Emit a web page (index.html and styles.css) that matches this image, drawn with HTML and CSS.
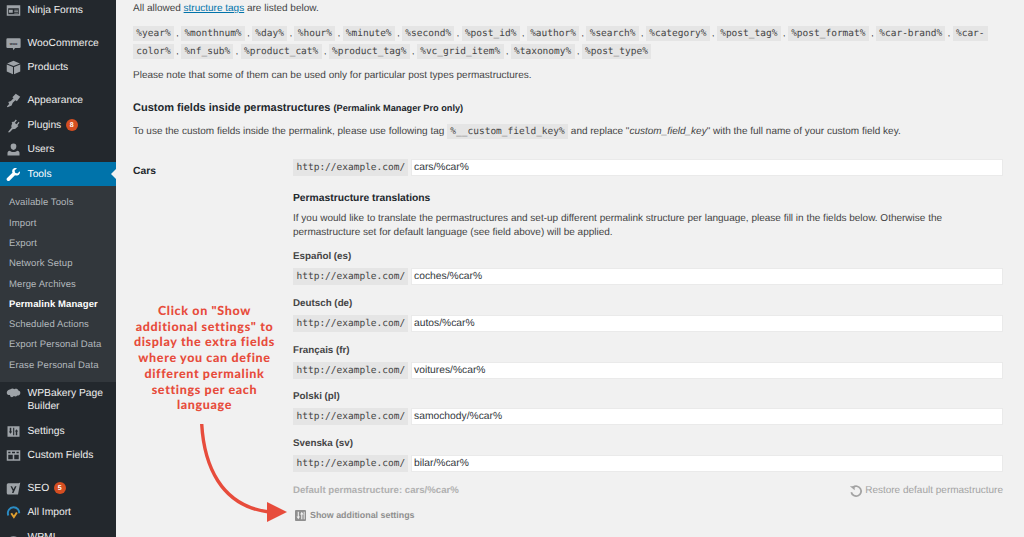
FILE: index.html
```html
<!DOCTYPE html>
<html lang="en">
<head>
<meta charset="utf-8">
<title>Permalink Manager</title>
<link rel="stylesheet" href="styles.css">
</head>
<body>
<div class="shell">
  <nav class="sidebar">
    <ul class="menu">
      <li class="item gap-after"><svg class="ico" viewBox="0 0 20 20"><path fill="#9ea3a8" fill-rule="evenodd" d="M1 3h18v14H1zM3 7v8h14V7zM4 9h5v4H4zM11 9h5v1h-5zM11 11h5v1h-5zM11 13h5v1h-5z"/></svg><span>Ninja Forms</span></li>
      <li class="item"><svg class="ico" viewBox="0 0 20 20"><path fill="#9ea3a8" d="M2 3h16a1.500 1.500 0 0 1 1.500 1.500v10a1.500 1.500 0 0 1-1.500 1.500h-6l-2 3-1-3H2a1.500 1.500 0 0 1-1.500-1.500v-10A1.500 1.500 0 0 1 2 3z"/><text x="10" y="11.500" class="woo">woo</text></svg><span>WooCommerce</span></li>
      <li class="item gap-after"><svg class="ico" viewBox="0 0 20 20"><path fill="#9ea3a8" d="M10 1l8.500 3.500L10 8 1.500 4.500zM1 6l8.300 3.400V19L1 15.200zM19 6l-8.300 3.400V19l8.300-3.800z"/></svg><span>Products</span></li>
      <li class="item"><svg class="ico" viewBox="0 0 20 20"><path fill="#9ea3a8" d="M13 1l6 4-4.500 6-2-1.500-3.500 3.500-1.500 3.500L2 19l-.8-1 3-3.500L3 12l3.500-1.500L10 7 8.500 5.500z"/></svg><span>Appearance</span></li>
      <li class="item"><svg class="ico" viewBox="0 0 20 20"><path fill="#9ea3a8" d="M13 2l1.500 1.200-2.700 3.300 2.300 1.800 2.700-3.300L18 6.200l-2.800 3.400 1.500 1.200-2 1.500c-1.500 2-3.500 3-5.500 2.500L5 19H2.500l5-6.500c-.8-1.500-.5-3.500.8-5L7.500 6l2-1.500 1 .8z"/></svg><span>Plugins</span><b class="badge">8</b></li>
      <li class="item"><svg class="ico" viewBox="0 0 20 20"><path fill="#9ea3a8" d="M10 2a3.800 3.800 0 0 1 3.800 4c0 2.500-1.700 4.500-3.800 4.500S6.200 8.500 6.200 6A3.800 3.800 0 0 1 10 2zM2 18v-3.500c0-1.500 1-2.500 3-3 1 1 3 1.800 5 1.800s4-.8 5-1.800c2 .5 3 1.500 3 3V18z"/></svg><span>Users</span></li>
      <li class="item active"><svg class="ico" viewBox="0 0 20 20"><path fill="#fff" d="M18.500 5.500l-3.300 3-3-1-.8-3 3.200-3c-2.500-.8-5 0-6 2-.6 1.300-.6 2.700 0 4L1.500 14.500c-1 1-1 2.500 0 3.500s2.500 1 3.500 0l7-7c1.300.5 2.700.5 4 0 2-1 3.200-3.500 2.500-5.500z"/></svg><span>Tools</span></li>
      <li class="submenu">
        <a>Available Tools</a>
        <a>Import</a>
        <a>Export</a>
        <a>Network Setup</a>
        <a>Merge Archives</a>
        <a class="current">Permalink Manager</a>
        <a>Scheduled Actions</a>
        <a>Export Personal Data</a>
        <a>Erase Personal Data</a>
      </li>
      <li class="item tall"><svg class="ico" viewBox="0 0 20 20"><path fill="#9ea3a8" d="M6 3c2-1.500 4-1 5 0 2-1.200 5-.5 5.500 1.500 2 .5 3 2 2.500 4-.5 2-2 3-4 2.800-1 1.500-3 1.700-4.500.7-1 1.500-3 2-4 1-1-.6-1.200-2-1-2.500C3 11 1 9.500 1 7.500S3 3.500 6 3z"/></svg><span>WPBakery Page Builder</span></li>
      <li class="item"><svg class="ico" viewBox="0 0 20 20"><path fill="#9ea3a8" fill-rule="evenodd" d="M2 3h16v14H2zM5 5v5H3.800l2.200 3 2.200-3H7V5zM13 15v-5h-1.200L14 7l2.200 3H15v5zM9.500 5v10h1.500V5z"/></svg><span>Settings</span></li>
      <li class="item gap-after"><svg class="ico" viewBox="0 0 20 20"><path fill="#9ea3a8" fill-rule="evenodd" d="M1 3h18v14H1zM3 5v2h3V5zM8 5v2h4V5zM14 5v2h3V5zM3 9v6h6V9zM11 9v6h6V9z"/></svg><span>Custom Fields</span></li>
      <li class="item"><svg class="ico" viewBox="0 0 20 20"><path fill="#9ea3a8" fill-rule="evenodd" d="M3 3h14l2-1-3 16H3a2 2 0 0 1-2-2V5a2 2 0 0 1 2-2zM6 7l3 6-1 3h2l4-9h-2l-2 4-2-4z"/></svg><span>SEO</span><b class="badge">5</b></li>
      <li class="item"><svg class="ico" viewBox="0 0 20 20"><path fill="none" stroke="#2b8cc4" stroke-width="2.600" d="M3 14C1 8 5 3 10 3s8 4 7.500 8"/><path fill="none" stroke="#e0a030" stroke-width="2.600" d="M7 11l3.500 5 4-6"/></svg><span>All Import</span></li>
      <li class="item"><svg class="ico" viewBox="0 0 20 20"><path fill="none" stroke="#9ea3a8" stroke-width="2" d="M3 14a7.500 7.500 0 0 1 14 0"/></svg><span>WPML</span></li>
    </ul>
  </nav>

  <main class="content">
    <p class="intro">All allowed <a class="link">structure tags</a> are listed below.</p>
    <p class="tags"><code>%year%</code> , <code>%monthnum%</code> , <code>%day%</code> , <code>%hour%</code> , <code>%minute%</code> , <code>%second%</code> , <code>%post_id%</code> , <code>%author%</code> , <code>%search%</code> , <code>%category%</code> , <code>%post_tag%</code> , <code>%post_format%</code> , <code>%car-brand%</code> , <code>%car-</code><br><code>color%</code> , <code>%nf_sub%</code> , <code>%product_cat%</code> , <code>%product_tag%</code> , <code>%vc_grid_item%</code> , <code>%taxonomy%</code> , <code>%post_type%</code></p>
    <p class="note">Please note that some of them can be used only for particular post types permastructures.</p>
    <h3 class="heading">Custom fields inside permastructures <small>(Permalink Manager Pro only)</small></h3>
    <p class="usage">To use the custom fields inside the permalink, please use following tag <code>%__custom_field_key%</code> and replace "<em>custom_field_key</em>" with the full name of your custom field key.</p>

    <section class="setting">
      <div class="setting-label">Cars</div>
      <div class="setting-body">
        <div class="field"><span class="prefix">http://example.com/</span><span class="value">cars/%car%</span></div>
        <h4 class="sub-title">Permastructure translations</h4>
        <p class="sub-desc">If you would like to translate the permastructures and set-up different permalink structure per language, please fill in the fields below. Otherwise the permastructure set for default language (see field above) will be applied.</p>
        <div class="lang">Español (es)</div>
        <div class="field"><span class="prefix">http://example.com/</span><span class="value">coches/%car%</span></div>
        <div class="lang">Deutsch (de)</div>
        <div class="field"><span class="prefix">http://example.com/</span><span class="value">autos/%car%</span></div>
        <div class="lang">Français (fr)</div>
        <div class="field"><span class="prefix">http://example.com/</span><span class="value">voitures/%car%</span></div>
        <div class="lang">Polski (pl)</div>
        <div class="field"><span class="prefix">http://example.com/</span><span class="value">samochody/%car%</span></div>
        <div class="lang">Svenska (sv)</div>
        <div class="field"><span class="prefix">http://example.com/</span><span class="value">bilar/%car%</span></div>
        <div class="defaults">
          <span class="default-text">Default permastructure: cars/%car%</span>
          <span class="restore"><svg class="restore-ico" viewBox="0 0 16 16"><path fill="none" stroke="#a3a3a3" stroke-width="2" d="M4.500 3.800A5.700 5.700 0 1 1 2.600 9.500"/><path fill="#a3a3a3" d="M1 2.500h5.500V7z"/></svg>Restore default permastructure</span>
        </div>
        <div class="additional"><svg class="add-ico" viewBox="0 0 12 12"><rect width="12" height="12" rx="1" fill="#8f8f8f"/><path fill="#f1f1f1" d="M3 2h1.200v5H5.500L3.600 10 1.700 7H3zM8 10H6.800V5H5.500l1.900-3 1.900 3H8zM9.500 2h1v8h-1z"/></svg>Show additional settings</div>
      </div>
    </section>

    <p class="callout">Click on "Show<br>additional settings" to<br>display the extra fields<br>where you can define<br>different permalink<br>settings per each<br>language</p>
    <svg class="arrow" viewBox="0 0 92 101"><path fill="none" stroke="#e74c3c" stroke-width="3.400" d="M6.700 0C9 40 25 82 74 88"/><path fill="#e74c3c" d="M72 78l20 10-20 10z"/></svg>
  </main>
</div>
</body>
</html>
```
FILE: styles.css
```css
* { box-sizing: border-box; }
html, body { margin: 0; height: 537px; overflow: hidden; }
body { background: #f1f1f1; color: #444; font-family: "Liberation Sans", Arial, sans-serif; font-size: 10px; text-rendering: geometricPrecision; }
.shell { display: flex; height: 537px; overflow: hidden; }

.sidebar { width: 116px; flex: none; background: #23282d; }
.menu { list-style: none; margin: -1.500px 0 0; padding: 0; }
.item { display: flex; align-items: center; min-height: 24.500px; padding-left: 6px; color: #eee; font-size: 10.300px; line-height: 13px; }
.item span { margin-left: 6.500px; }
.item.gap-after { margin-bottom: 8.200px; }
.item.active { background: #0073aa; color: #fff; position: relative; }
.item.active::after { content: ""; position: absolute; right: 0; top: 7px; border: 5px solid transparent; border-left-width: 0; border-right-color: #f1f1f1; }
.item.tall { min-height: 37px; align-items: flex-start; padding-top: 5px; }
.ico { width: 15px; height: 15px; flex: none; }
.woo { font: bold 5px "Liberation Sans", sans-serif; fill: #23282d; text-anchor: middle; }
.badge { display: inline-flex; align-items: center; justify-content: center; width: 12px; height: 12px; margin-left: 4.500px; border-radius: 50%; background: #d54e21; color: #fff; font-size: 7px; font-weight: 700; }
.submenu { background: #32373c; padding: 7px 0 6px; }
.submenu a { display: block; height: 20.300px; line-height: 20.300px; padding-left: 9px; color: #b4b9be; font-size: 9.500px; letter-spacing: .1px; white-space: nowrap; }
.submenu a.current { color: #fff; font-weight: 700; }

.content { flex: 1; min-width: 0; padding: 2px 21px 0 17px; position: relative; line-height: 14px; }
p { margin: 0; }
.link { color: #0073aa; text-decoration: underline; }
code { font-family: "DejaVu Sans Mono", "Liberation Mono", monospace; font-size: 9.500px; background: #e5e5e5; padding: 2px 3.300px; color: #444; }
.tags { margin-top: 9px; font-size: 8.600px; line-height: 16.700px; }
.note { margin-top: 9px; }
.heading { margin: 18px 0 0; font-size: 11px; line-height: 14px; color: #23282d; font-weight: 700; }
.heading small { font-size: 9.200px; }
.usage { margin-top: 10px; }

.setting { display: flex; margin-top: 20px; }
.setting-label { width: 160px; flex: none; font-size: 10.300px; font-weight: 700; color: #23282d; padding-top: 6px; }
.setting-body { flex: 1; min-width: 0; }
.field { display: flex; height: 17px; align-items: stretch; }
.prefix { width: 115px; flex: none; margin-right: 3px; background: #e5e5e5; font-family: "DejaVu Sans Mono", monospace; font-size: 9.500px; line-height: 17px; padding-left: 3.500px; white-space: nowrap; }
.value { flex: 1; background: #fff; box-shadow: inset 0 0 0 1px #eaeaea; font-size: 10.300px; line-height: 17px; padding-left: 3px; color: #32373c; }
.sub-title { margin: 16px 0 0; font-size: 10.300px; line-height: 14px; font-weight: 700; color: #23282d; }
.sub-desc { margin-top: 6px; }
.lang { margin-top: 11.700px; height: 18px; line-height: 14px; font-weight: 700; color: #444; font-size: 9.800px; }
.sub-desc + .lang { margin-top: 10px; }
.defaults { display: flex; justify-content: space-between; align-items: center; margin-top: 11px; color: #a9a9a9; height: 16px; }
.default-text { font-weight: 700; font-size: 9.650px; color: #b0b0b0; }
.restore { display: inline-flex; align-items: center; gap: 2px; color: #a3a3a3; }
.restore-ico { width: 14px; height: 14px; }
.additional { display: flex; align-items: center; gap: 4px; margin-top: 9px; margin-left: 2px; font-weight: 700; font-size: 8.900px; color: #8f8f8f; }
.add-ico { width: 11px; height: 11px; }

.callout { position: absolute; left: 1px; top: 303px; width: 175px; text-align: center; color: #e74c3c; font-family: Lato, sans-serif; font-weight: 900; font-size: 12.500px; letter-spacing: .65px; line-height: 15.700px; }
.arrow { position: absolute; left: 79px; top: 424px; width: 92px; height: 101px; }
```
